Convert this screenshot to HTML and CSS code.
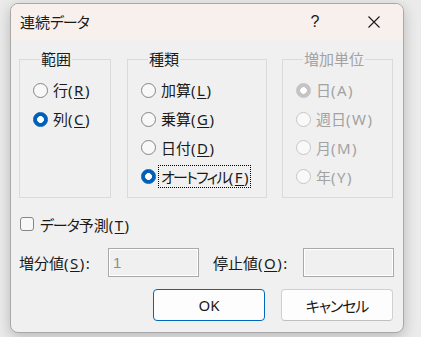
FILE: index.html
```html
<!DOCTYPE html>
<html lang="ja">
<head>
<meta charset="utf-8">
<title>連続データ</title>
<link rel="stylesheet" href="styles.css">
</head>
<body>
<div class="dialog">
  <div class="titlebar">
    <span class="title">連続<span class="kana">データ</span></span>
    <span class="help">?</span>
    <span class="close"><svg width="12" height="12" viewBox="0 0 12 12"><path d="M0.5 0.5 L11.5 11.5 M11.5 0.5 L0.5 11.5" stroke="#1a1a1a" stroke-width="1.1" fill="none"/></svg></span>
  </div>
  <div class="content">
    <div class="groups">
      <fieldset class="group g-range">
        <legend>範囲</legend>
        <div class="opt"><span class="radio"></span><span>行<span class="acc">(<u>R</u>)</span></span></div>
        <div class="opt"><span class="radio on"></span><span>列<span class="acc">(<u>C</u>)</span></span></div>
      </fieldset>
      <fieldset class="group g-type">
        <legend>種類</legend>
        <div class="opt"><span class="radio"></span><span>加算<span class="acc">(<u>L</u>)</span></span></div>
        <div class="opt"><span class="radio"></span><span>乗算<span class="acc">(<u>G</u>)</span></span></div>
        <div class="opt"><span class="radio"></span><span>日付<span class="acc">(<u>D</u>)</span></span></div>
        <div class="opt"><span class="radio on"></span><span class="focus"><span class="kana tight">オートフィル</span><span class="acc">(<u>F</u>)</span></span></div>
      </fieldset>
      <fieldset class="group g-unit disabled">
        <legend>増加単位</legend>
        <div class="opt"><span class="radio on"></span><span>日<span class="acc">(A)</span></span></div>
        <div class="opt"><span class="radio"></span><span>週日<span class="acc">(W)</span></span></div>
        <div class="opt"><span class="radio"></span><span>月<span class="acc">(M)</span></span></div>
        <div class="opt"><span class="radio"></span><span>年<span class="acc">(Y)</span></span></div>
      </fieldset>
    </div>
    <div class="check-row"><span class="checkbox"></span><span><span class="kana">データ</span>予測<span class="acc">(<u>T</u>)</span></span></div>
    <div class="inputs">
      <span class="field-label">増分値<span class="acc">(<u>S</u>):</span></span>
      <div class="input">1</div>
      <span class="field-label second">停止値<span class="acc">(<u>O</u>):</span></span>
      <div class="input"></div>
    </div>
    <div class="buttons">
      <div class="btn primary">OK</div>
      <div class="btn"><span class="kana">キャンセル</span></div>
    </div>
  </div>
</div>
</body>
</html>
```
FILE: styles.css
```css
html, body {
  margin: 0;
  padding: 0;
}
body {
  background: #ebebeb;
  font-family: "Noto Sans", "Noto Sans CJK JP", sans-serif;
  font-size: 15px;
  font-feature-settings: "palt";
  color: #1a1a1a;
  width: 421px;
  height: 337px;
  overflow: hidden;
  padding-top: 3px;
  padding-left: 10px;
  box-sizing: border-box;
}
.kana {
  letter-spacing: -1.1px;
}
.kana.tight {
  letter-spacing: -1.7px;
}
.acc {
  letter-spacing: 1.5px;
}
.dialog {
  width: 394px;
  height: 330px;
  box-sizing: border-box;
  border: 1px solid #a8a8a8;
  border-radius: 8px;
  background: #f0f0f0;
  box-shadow: 0 4px 14px rgba(0, 0, 0, 0.22);
  overflow: hidden;
  display: flex;
  flex-direction: column;
}
.titlebar {
  height: 36px;
  background: #f7f0ed;
  display: flex;
  align-items: center;
  padding-left: 9px;
  padding-bottom: 1px;
  box-sizing: border-box;
  flex: none;
}
.title {
  font-size: 15px;
  line-height: 20px;
  flex: 1;
}
.help {
  width: 20px;
  text-align: center;
  font-family: "Liberation Sans", sans-serif;
  font-size: 16px;
  margin-right: 43px;
}
.close {
  width: 12px;
  height: 12px;
  display: flex;
  margin-right: 23px;
}
.content {
  padding: 11px 10px 0 8px;
  display: flex;
  flex-direction: column;
}
.groups {
  display: flex;
  gap: 16px;
}
.group {
  margin: 0;
  padding: 9px 0 0 13px;
  border: 1px solid #dadada;
  height: 147px;
  box-sizing: border-box;
  min-width: 0;
}
.group legend {
  padding: 0 1px;
  margin-left: 7px;
  line-height: 16px;
  font-size: 15px;
}
.g-range { width: 92px; }
.g-type { width: 140px; }
.g-unit { width: 111px; margin-left: -1px; }
.disabled { color: #a2a2a2; }
.opt {
  height: 28.8px;
  display: flex;
  align-items: center;
  gap: 5px;
  line-height: 20px;
  white-space: nowrap;
}
.radio {
  width: 15px;
  height: 15px;
  border-radius: 50%;
  border: 1px solid #858585;
  background: #f8f8f8;
  box-sizing: border-box;
  flex: none;
}
.radio.on {
  border-color: #005fb8;
  background: radial-gradient(circle, #ffffff 0 3.1px, #005fb8 3.7px);
}
.disabled .radio {
  border-color: #c6c6c6;
  background: #f9f9f9;
}
.disabled .radio.on {
  border-color: #c4c4c4;
  background: radial-gradient(circle, #ffffff 0 3px, #c4c4c4 3.6px);
}
.focus {
  outline: 1px dotted #000;
  padding: 1px 0 0 2px;
  margin-left: -2px;
  line-height: 20px;
}
u {
  text-decoration-thickness: 1px;
  text-underline-offset: 2px;
}
.check-row {
  margin-top: 16px;
  height: 20px;
  display: flex;
  align-items: center;
  gap: 6px;
  padding-left: 1px;
}
.checkbox {
  width: 14px;
  height: 14px;
  box-sizing: border-box;
  border: 1px solid #858585;
  border-radius: 3px;
  background: #f8f8f8;
  flex: none;
}
.inputs {
  margin-top: 14px;
  display: grid;
  grid-template-columns: 89px 91px 104px 91px;
  align-items: center;
}
.field-label {
  white-space: nowrap;
}
.field-label.second {
  padding-left: 14px;
}
.input {
  height: 29px;
  box-sizing: border-box;
  border: 1px solid #a9a9a9;
  box-shadow: inset 0 0 0 1px #ffffff;
  background: #f0f0f0;
  color: #8c8c8c;
  font-family: "Liberation Sans", sans-serif;
  font-size: 15px;
  line-height: 27px;
  padding-left: 4px;
}
.buttons {
  margin-top: 12px;
  display: flex;
  justify-content: flex-end;
  gap: 16px;
}
.btn {
  width: 112px;
  height: 32px;
  box-sizing: border-box;
  border: 1px solid #d0d0d0;
  border-bottom-color: #c0c0c0;
  border-radius: 4px;
  background: #fdfdfd;
  display: flex;
  align-items: center;
  justify-content: center;
  font-size: 15px;
}
.btn.primary {
  border-color: #0067c0;
}
```
